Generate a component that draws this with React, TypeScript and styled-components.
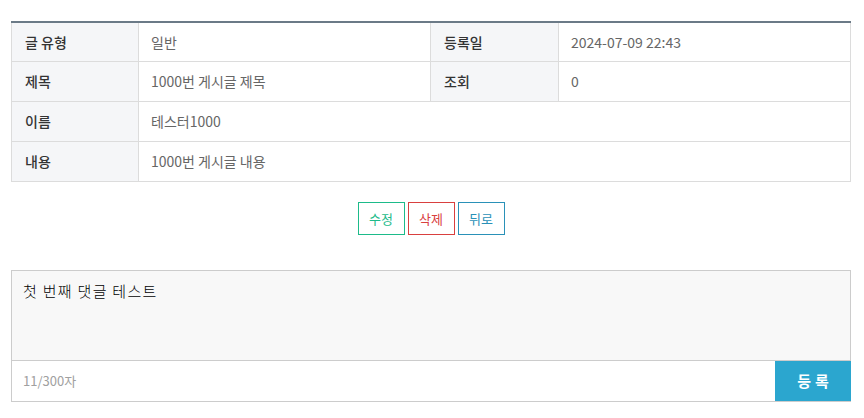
import styled, { createGlobalStyle } from 'styled-components'

const GlobalStyle = createGlobalStyle`
  body {
    margin: 0;
    background: #fff;
    font-family: "Noto Sans CJK KR", "Noto Sans", sans-serif;
  }
`

const Page = styled.div`
  width: 840px;
  padding: 21px 0 0 11px;
`

const InfoTable = styled.table`
  width: 100%;
  border-collapse: collapse;
  border-top: 2px solid #6b7a87;
  font-size: 14px;
  table-layout: fixed;
`

const Row = styled.tr<{ $first?: boolean }>`
  height: ${({ $first }) => ($first ? '39px' : '40px')};
`

const Label = styled.th`
  padding: 0 0 0 13px;
  text-align: left;
  font-weight: 500;
  color: #333;
  background: #f5f6f8;
  border: 1px solid #dcdcdc;
`

const Value = styled.td`
  padding: 0 0 0 12px;
  color: #666;
  border: 1px solid #dcdcdc;
`

const ButtonRow = styled.div`
  display: flex;
  justify-content: center;
  gap: 3px;
  margin-top: 20px;
`

const OutlineButton = styled.button<{ $color: string }>`
  box-sizing: border-box;
  width: 47px;
  height: 33px;
  padding: 0;
  background: #fff;
  border-width: 1px;
  border-style: solid;
  border-color: ${({ $color }) => $color};
  color: ${({ $color }) => $color};
  font-family: inherit;
  font-size: 13px;
  cursor: pointer;
`

const CommentBox = styled.div`
  margin-top: 35px;
  border: 1px solid #cccccc;
`

const CommentArea = styled.div`
  height: 90px;
  padding: 9px 11px;
  box-sizing: border-box;
  background: #f8f8f8;
  border-bottom: 1px solid #cccccc;
  font-size: 15px;
  font-weight: 300;
  letter-spacing: 1.3px;
  color: #000;
`

const CommentFooter = styled.div`
  display: flex;
  align-items: center;
  justify-content: space-between;
  height: 40px;
`

const Counter = styled.span`
  padding-left: 11px;
  font-size: 13px;
  color: #a0a0a0;
`

const SubmitButton = styled.button`
  width: 76px;
  height: 40px;
  margin-right: -1px;
  border: 0;
  background: #2ba6cf;
  color: #fff;
  font-family: inherit;
  font-size: 15px;
  font-weight: 700;
  letter-spacing: 4px;
  text-indent: 4px;
  cursor: pointer;
`

export default function App() {
  return (
    <Page>
      <GlobalStyle />
      <InfoTable>
        <colgroup>
          <col style={{ width: 127 }} />
          <col style={{ width: 292 }} />
          <col style={{ width: 128 }} />
          <col />
        </colgroup>
        <tbody>
          <Row $first>
            <Label>글 유형</Label>
            <Value>일반</Value>
            <Label>등록일</Label>
            <Value>2024-07-09 22:43</Value>
          </Row>
          <Row>
            <Label>제목</Label>
            <Value>1000번 게시글 제목</Value>
            <Label>조회</Label>
            <Value>0</Value>
          </Row>
          <Row>
            <Label>이름</Label>
            <Value colSpan={3}>테스터1000</Value>
          </Row>
          <Row>
            <Label>내용</Label>
            <Value colSpan={3}>1000번 게시글 내용</Value>
          </Row>
        </tbody>
      </InfoTable>

      <ButtonRow>
        <OutlineButton $color="#1dbb8a">수정</OutlineButton>
        <OutlineButton $color="#d9403f">삭제</OutlineButton>
        <OutlineButton $color="#2a91b8">뒤로</OutlineButton>
      </ButtonRow>

      <CommentBox>
        <CommentArea>첫 번째 댓글 테스트</CommentArea>
        <CommentFooter>
          <Counter>11/300자</Counter>
          <SubmitButton>등록</SubmitButton>
        </CommentFooter>
      </CommentBox>
    </Page>
  )
}
